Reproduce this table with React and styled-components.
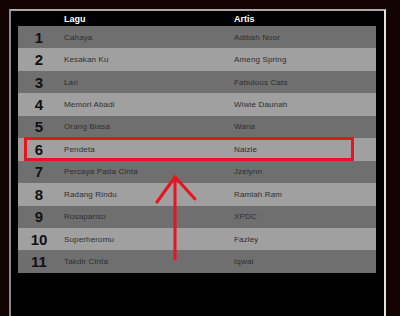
import styled, { createGlobalStyle } from 'styled-components'

const GlobalStyle = createGlobalStyle`
  html, body {
    margin: 0;
    padding: 0;
    background: #140303;
    font-family: "Liberation Sans", Arial, sans-serif;
  }
`

const songs = [
  ['Cahaya', 'Adibah Noor'],
  ['Kesakan Ku', 'Ameng Spring'],
  ['Lari', 'Fabulous Cats'],
  ['Memori Abadi', 'Wiwie Daunah'],
  ['Orang Biasa', 'Wana'],
  ['Pendeta', 'Naizle'],
  ['Percaya Pada Cinta', 'Jzelynn'],
  ['Radang Rindu', 'Ramlah Ram'],
  ['Rosapariso', 'XPDC'],
  ['Superheromu', 'Fazley'],
  ['Takdir Cinta', 'Iqwal'],
]

const Page = styled.div`
  position: relative;
  width: 400px;
  height: 316px;
  overflow: hidden;
  padding: 9px 0 0 9px;
  box-sizing: border-box;
`

const Frame = styled.div`
  box-sizing: border-box;
  width: 377px;
  height: 320px;
  background: #000;
  border-top: 2px solid #a8a8a8;
  border-left: 2px solid #8c8c8c;
  border-right: 2px solid #e2e2e2;
  padding-left: 7px;
`

const Table = styled.div`
  width: 358px;
`

const Row = styled.div`
  display: grid;
  grid-template-columns: 42px 170px 1fr;
  align-items: center;
  height: ${p => p.$head ? '15px' : '22.45px'};
  background: ${p => p.$head ? '#000' : p.$light ? '#a0a0a0' : '#6f6f6f'};
`

const HeadCell = styled.div`
  padding-left: 4px;
  font-size: 9px;
  font-weight: bold;
  color: #fff;
`

const Num = styled.div`
  text-align: center;
  font-size: 15px;
  font-weight: bold;
  color: #111;
`

const Cell = styled.div`
  padding-left: 4px;
  font-size: 8px;
  letter-spacing: 0.15px;
  color: #2e2e2e;
`

const Highlight = styled.div`
  position: absolute;
  left: 24px;
  top: 137px;
  width: 330px;
  height: 24px;
  box-sizing: border-box;
  border: 3px solid #e8141e;
`

const Arrow = styled.svg`
  position: absolute;
  left: 0;
  top: 0;
`

export default function App() {
  return (
    <>
      <GlobalStyle />
      <Page>
        <Frame>
          <Table>
            <Row $head>
              <div />
              <HeadCell>Lagu</HeadCell>
              <HeadCell>Artis</HeadCell>
            </Row>
            {songs.map(([title, artist], i) => (
              <Row key={title} $light={i % 2 === 1}>
                <Num>{i + 1}</Num>
                <Cell>{title}</Cell>
                <Cell>{artist}</Cell>
              </Row>
            ))}
          </Table>
        </Frame>
        <Highlight />
        <Arrow width="400" height="316" viewBox="0 0 400 316">
          <g stroke="#e8141e" strokeWidth="3" fill="none" strokeLinecap="round" strokeLinejoin="round">
            <line x1="175" y1="177" x2="175" y2="259" />
            <polyline points="157,202 175,177 195,199" />
          </g>
        </Arrow>
      </Page>
    </>
  )
}
